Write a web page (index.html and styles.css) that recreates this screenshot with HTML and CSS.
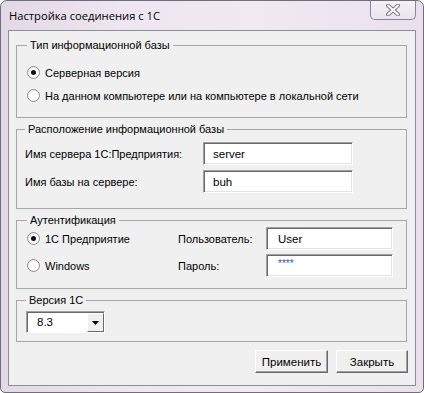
FILE: index.html
```html
<!DOCTYPE html>
<html lang="ru">
<head>
    <meta charset="UTF-8">
    <meta name="viewport" content="width=device-width, initial-scale=1.0">
    <title>Настройка соединения с 1С</title>
    <link rel="stylesheet" href="styles.css">
</head>
<body>
    <div class="window">
        <!-- Title bar -->
        <div class="titlebar">
            <span class="title">Настройка соединения с 1С</span>
            <button class="close-button" title="Закрыть">
                <svg width="14" height="12" viewBox="0 0 14 12">
                    <path d="M2 1.5 L12 10.5 M12 1.5 L2 10.5" stroke="#7a7884" stroke-width="4" stroke-linecap="round"/>
                    <path d="M2 1.5 L12 10.5 M12 1.5 L2 10.5" stroke="#ffffff" stroke-width="2" stroke-linecap="round"/>
                </svg>
            </button>
        </div>

        <div class="client">
            <!-- Database type -->
            <fieldset class="group group-type">
                <legend>Тип информационной базы</legend>
                <label class="radio-row"><input type="radio" name="dbtype" checked> Серверная версия</label>
                <label class="radio-row"><input type="radio" name="dbtype"> На данном компьютере или на компьютере в локальной сети</label>
            </fieldset>

            <!-- Location -->
            <fieldset class="group group-location">
                <legend>Расположение информационной базы</legend>
                <div class="form-grid">
                    <span>Имя сервера 1С:Предприятия:</span>
                    <input type="text" class="field" value="server">
                    <span>Имя базы на сервере:</span>
                    <input type="text" class="field" value="buh">
                </div>
            </fieldset>

            <!-- Authentication -->
            <fieldset class="group group-auth">
                <legend>Аутентификация</legend>
                <div class="auth-grid">
                    <label class="radio-row"><input type="radio" name="auth" checked> 1С Предприятие</label>
                    <span>Пользователь:</span>
                    <input type="text" class="field" value="User">
                    <label class="radio-row"><input type="radio" name="auth"> Windows</label>
                    <span>Пароль:</span>
                    <div class="field password">****</div>
                </div>
            </fieldset>

            <!-- Version -->
            <fieldset class="group group-version">
                <legend>Версия 1С</legend>
                <div class="combo">
                    <span class="combo-value">8.3</span>
                    <span class="combo-arrow">
                        <svg width="7" height="4" viewBox="0 0 7 4"><path d="M0 0 H7 L3.5 4 Z" fill="#000"/></svg>
                    </span>
                </div>
            </fieldset>

            <div class="buttons">
                <button class="btn">Применить</button>
                <button class="btn">Закрыть</button>
            </div>
        </div>
    </div>
</body>
</html>
```

FILE: styles.css
```css
body {
    margin: 0;
    padding: 0;
    background-color: #ffffff;
    font-family: 'Liberation Sans', Arial, sans-serif;
    font-size: 11px;
    color: #000;
}

.window {
    width: 424px;
    height: 393px;
    box-sizing: border-box;
    border: 1px solid #6e6e7c;
    border-radius: 7px 7px 5px 5px;
    background: linear-gradient(90deg, #e3d9e6 0%, #eee6f0 30%, #f1eaf2 60%, #e9e0ec 100%);
    display: flex;
    flex-direction: column;
    overflow: hidden;
}

/* Title bar */
.titlebar {
    height: 29px;
    display: flex;
    align-items: flex-start;
    padding-left: 8px;
}

.title {
    font-family: 'Open Sans', sans-serif;
    font-size: 11.2px;
    line-height: 30px;
    color: #000;
}

.close-button {
    margin-left: auto;
    margin-right: 7px;
    margin-top: -1px;
    width: 46px;
    height: 20px;
    padding: 0;
    border: 1px solid #8a8896;
    border-top: none;
    border-radius: 0 0 5px 5px;
    background: linear-gradient(#f6f0f7, #ebe3ed);
    display: flex;
    align-items: center;
    justify-content: center;
}

/* Client area */
.client {
    flex: 1;
    margin: 0 7px 6px 7px;
    border: 1px solid #8d8d99;
    background-color: #f0f0f0;
    padding: 7px 8px 11px 7px;
    display: flex;
    flex-direction: column;
    gap: 4px;
}

.group {
    margin: 0;
    padding: 0 10px;
    border: 1px solid #a6a6a6;
    border-radius: 0;
    min-inline-size: 0;
}

.group legend {
    padding: 0 3px;
    line-height: 14px;
    margin-left: 0;
    font-size: 11px;
}

.group-type {
    padding-top: 9px;
    padding-bottom: 10px;
}

.group-location {
    padding-top: 6px;
    padding-bottom: 15px;
    padding-left: 8px;
}

.group-auth {
    padding-top: 0;
    padding-bottom: 11px;
}

.group-version {
    padding-top: 4px;
    padding-bottom: 8px;
    padding-left: 9px;
}

/* Radio buttons */
.radio-row {
    display: flex;
    align-items: center;
    height: 23px;
    white-space: nowrap;
}

.radio-row input {
    appearance: none;
    -webkit-appearance: none;
    width: 13px;
    height: 13px;
    margin: 0 5px 0 0;
    border: 1px solid #8f8f8f;
    border-radius: 50%;
    background: radial-gradient(circle at 60% 60%, #ffffff 40%, #e2e2e2 100%);
    position: relative;
}

.radio-row input:checked::after {
    content: '';
    position: absolute;
    left: 3px;
    top: 3px;
    width: 5px;
    height: 5px;
    border-radius: 50%;
    background: #111;
}

/* Text fields */
.field {
    box-sizing: border-box;
    height: 23px;
    margin: 0;
    padding: 0 9px;
    font-family: 'Liberation Sans', Arial, sans-serif;
    font-size: 11.5px;
    color: #000;
    background: #fff;
    border: 1px solid;
    border-color: #a0a0a0 #ffffff #ffffff #a0a0a0;
    box-shadow: inset 1px 1px 0 #696969, inset -1px -1px 0 #e3e3e3;
    outline: none;
}

.form-grid {
    display: grid;
    grid-template-columns: 178px 150px;
    row-gap: 5px;
    align-items: center;
}

.auth-grid {
    display: grid;
    grid-template-columns: 151px 88px 127px;
    row-gap: 4px;
    align-items: center;
}

.auth-grid .field {
    padding-left: 11px;
}

.password {
    display: flex;
    align-items: center;
    font-size: 10px;
    color: #2a5aa0;
    padding-bottom: 4px;
}

/* Combo box */
.combo {
    box-sizing: border-box;
    width: 79px;
    height: 22px;
    display: flex;
    background: #fff;
    border: 1px solid;
    border-color: #a0a0a0 #ffffff #ffffff #a0a0a0;
    box-shadow: inset 1px 1px 0 #696969;
}

.combo-value {
    flex: 1;
    padding-left: 10px;
    line-height: 21px;
    font-size: 11.5px;
}

.combo-arrow {
    width: 17px;
    margin: 1px 0 0 0;
    box-sizing: border-box;
    background: #f0f0f0;
    border: 1px solid;
    border-color: #ffffff #696969 #696969 #ffffff;
    display: flex;
    align-items: center;
    justify-content: center;
}

/* Dialog buttons */
.buttons {
    margin-top: 4px;
    display: flex;
    justify-content: flex-end;
    gap: 8px;
    margin-right: -1px;
}

.btn {
    box-sizing: border-box;
    height: 23px;
    padding: 0;
    font-family: 'Liberation Sans', Arial, sans-serif;
    font-size: 11.5px;
    color: #000;
    background: #f0f0f0;
    border: 1px solid;
    border-color: #ffffff #696969 #696969 #ffffff;
    box-shadow: inset -1px -1px 0 #a0a0a0;
}

.btn:first-child {
    width: 73px;
}

.btn:last-child {
    width: 72px;
}
```
